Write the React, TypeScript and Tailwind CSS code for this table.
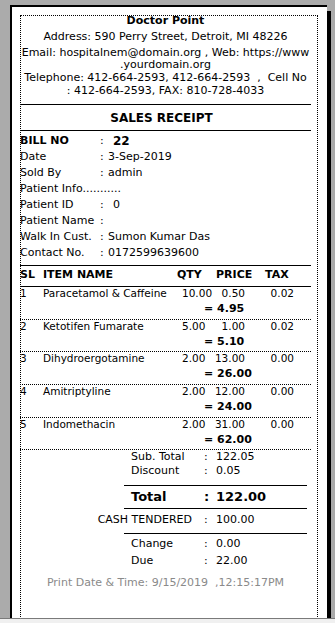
import React from "react";

const info: { label: string; value: string; bold?: boolean; wide?: boolean; noColon?: boolean }[] = [
  { label: "BILL NO", value: "22", bold: true, wide: true },
  { label: "Date", value: "3-Sep-2019" },
  { label: "Sold By", value: "admin" },
  { label: "Patient Info...........", value: "", noColon: true },
  { label: "Patient ID", value: "0", wide: true },
  { label: "Patient Name", value: "" },
  { label: "Walk In Cust.", value: "Sumon Kumar Das" },
  { label: "Contact No.", value: "0172599639600" },
];

const items = [
  { sl: "1", name: "Paracetamol & Caffeine", qty: "10.00", price: "0.50", tax: "0.02", total: "= 4.95", h: "h-[20px]" },
  { sl: "2", name: "Ketotifen Fumarate", qty: "5.00", price: "1.00", tax: "0.02", total: "= 5.10", h: "h-[19px]" },
  { sl: "3", name: "Dihydroergotamine", qty: "2.00", price: "13.00", tax: "0.00", total: "= 26.00", h: "h-[20px]" },
  { sl: "4", name: "Amitriptyline", qty: "2.00", price: "12.00", tax: "0.00", total: "= 24.00", h: "h-[20px]" },
  { sl: "5", name: "Indomethacin", qty: "2.00", price: "31.00", tax: "0.00", total: "= 62.00", h: "h-[19px]" },
];

function Line({ className = "" }: { className?: string }) {
  return <div className={"h-px bg-black " + className} />;
}

export default function App() {
  return (
    <div className="w-[335px] h-[623px] bg-[#ababab] flex flex-col overflow-hidden font-['DejaVu_Sans',sans-serif] text-black">
      <div className="h-[618px] overflow-hidden">
        <div className="ml-[10px] mt-[5px] w-[317px] h-[700px] bg-white border-l-2 border-t-2 border-black shadow-[4px_6px_0_0_#000]">
          <div className="ml-[8px] mt-[8px] w-[298px] h-[680px] border border-dotted border-black">
            <div className="-ml-px w-[291px] flex flex-col">
              {/* Header */}
              <div className="h-[10px] leading-[10px] text-[11px] font-bold text-center whitespace-nowrap">Doctor Point</div>
              <div className="mt-[4px] h-[13px] leading-[13px] text-[11px] text-center whitespace-nowrap">
                Address: 590 Perry Street, Detroit, MI 48226
              </div>
              <div className="mt-[4px] leading-[12px] text-[11px] text-center whitespace-nowrap">
                <div>Email: hospitalnem@domain.org , Web: https://www</div>
                <div>.yourdomain.org</div>
              </div>
              <div className="leading-[13px] text-[11px] text-center whitespace-pre">
                <div>{"Telephone: 412-664-2593, 412-664-2593  ,  Cell No"}</div>
                <div>{": 412-664-2593, FAX: 810-728-4033"}</div>
              </div>
              <Line className="mt-[7px] ml-0 w-[291px]" />
              <div className="mt-[5px] h-[16px] leading-[16px] w-[283px] text-[12px] font-bold text-center">SALES RECEIPT</div>
              <Line className="mt-[4px] w-[291px]" />

              {/* Info */}
              <div className="mt-[2px] flex flex-col">
                {info.map((r) => (
                  <div key={r.label} className="h-[16px] leading-[16px] text-[11px] flex whitespace-nowrap">
                    <div className={"w-[80px] " + (r.bold ? "font-bold" : "")}>{r.label}</div>
                    {!r.noColon && (
                      <>
                        <div className="w-[8px]">:</div>
                        <div className={(r.wide ? "ml-[5px] " : "") + (r.bold ? "font-bold text-[12px]" : "")}>{r.value}</div>
                      </>
                    )}
                  </div>
                ))}
              </div>

              <Line className="mt-[4px] w-[291px]" />
              <div className="mt-[1px] h-[16px] leading-[16px] text-[11px] font-bold flex whitespace-nowrap">
                <div className="w-[23px]">SL</div>
                <div className="w-[134px]">ITEM NAME</div>
                <div className="w-[39px]">QTY</div>
                <div className="w-[49px]">PRICE</div>
                <div>TAX</div>
              </div>
              <Line className="mt-[3px] w-[291px]" />

              {/* Items */}
              {items.map((it) => (
                <div key={it.sl} className="w-[291px] border-b border-dotted border-black">
                  <div className="h-[12px] leading-[12px] text-[10.5px] flex whitespace-nowrap">
                    <div className="w-[23px]">{it.sl}</div>
                    <div className="w-[139px]">{it.name}</div>
                    <div className="w-[32px]">{it.qty}</div>
                    <div className="w-[31px] text-right">{it.price}</div>
                    <div className="w-[49px] text-right">{it.tax}</div>
                  </div>
                  <div className={it.h + " leading-[20px] text-[11px] font-bold pl-[184px] whitespace-nowrap"}>{it.total}</div>
                </div>
              ))}

              {/* Totals */}
              <div className="h-[14px] leading-[14px] text-[11px] flex whitespace-nowrap">
                <div className="ml-[111px] w-[73px]">Sub. Total</div>
                <div className="w-[12px]">:</div>
                <div>122.05</div>
              </div>
              <div className="h-[14px] leading-[14px] text-[11px] flex whitespace-nowrap">
                <div className="ml-[111px] w-[73px]">Discount</div>
                <div className="w-[12px]">:</div>
                <div>0.05</div>
              </div>
              <Line className="mt-[7px] ml-[104px] w-[183px]" />
              <div className="h-[22px] leading-[22px] text-[13px] font-bold flex whitespace-nowrap">
                <div className="ml-[111px] w-[73px]">Total</div>
                <div className="w-[12px]">:</div>
                <div>122.00</div>
              </div>
              <Line className="ml-[104px] w-[183px]" />
              <div className="h-[22px] leading-[22px] text-[11px] flex whitespace-nowrap">
                <div className="w-[172px] text-right">CASH TENDERED</div>
                <div className="ml-[12px] w-[12px]">:</div>
                <div>100.00</div>
              </div>
              <Line className="mt-[2px] ml-[104px] w-[183px]" />
              <div className="h-[20px] leading-[20px] text-[11px] flex whitespace-nowrap">
                <div className="ml-[111px] w-[73px]">Change</div>
                <div className="w-[12px]">:</div>
                <div>0.00</div>
              </div>
              <div className="h-[14px] leading-[14px] text-[11px] flex whitespace-nowrap">
                <div className="ml-[111px] w-[73px]">Due</div>
                <div className="w-[12px]">:</div>
                <div>22.00</div>
              </div>
              <div className="mt-[8px] h-[14px] leading-[14px] text-[11px] text-[#8a8a8a] text-center whitespace-pre">
                {"Print Date & Time: 9/15/2019  ,12:15:17PM"}
              </div>
            </div>
          </div>
        </div>
      </div>
      <div className="h-[5px] bg-[#f0f0f0] border-t border-[#7a7a7a]" />
    </div>
  );
}
